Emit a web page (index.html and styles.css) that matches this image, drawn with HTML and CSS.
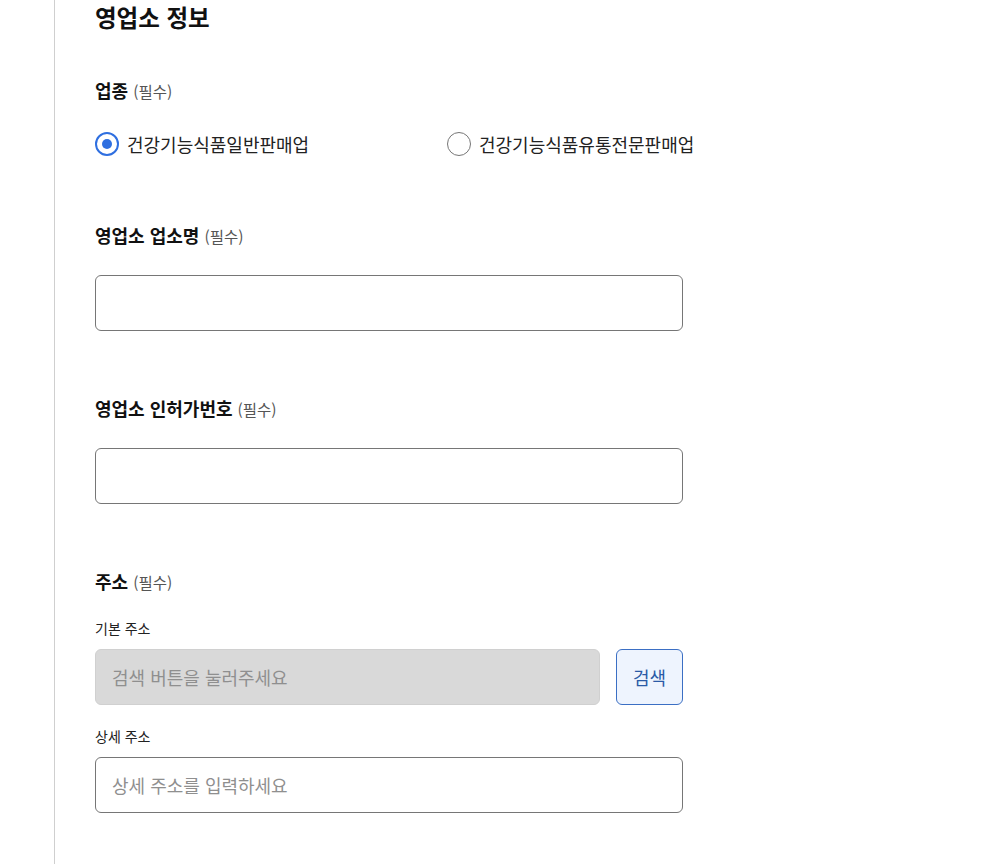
FILE: index.html
```html
<!DOCTYPE html>
<html lang="ko">
<head>
<meta charset="utf-8">
<link rel="stylesheet" href="styles.css">
</head>
<body>
<div class="page">
  <section class="panel">
    <h2 class="title">영업소 정보</h2>

    <div class="group group-type">
      <div class="label">업종 <span class="req">(필수)</span></div>
      <div class="radios">
        <label class="radio checked"><span class="circle"></span><span>건강기능식품일반판매업</span></label>
        <label class="radio"><span class="circle"></span><span>건강기능식품유통전문판매업</span></label>
      </div>
    </div>

    <div class="group">
      <div class="label">영업소 업소명 <span class="req">(필수)</span></div>
      <div class="input"></div>
    </div>

    <div class="group">
      <div class="label">영업소 인허가번호 <span class="req">(필수)</span></div>
      <div class="input"></div>
    </div>

    <div class="group">
      <div class="label">주소 <span class="req">(필수)</span></div>
      <div class="sublabel first">기본 주소</div>
      <div class="row">
        <div class="input disabled"><span class="ph">검색 버튼을 눌러주세요</span></div>
        <button class="btn">검색</button>
      </div>
      <div class="sublabel second">상세 주소</div>
      <div class="input"><span class="ph">상세 주소를 입력하세요</span></div>
    </div>
  </section>
</div>
</body>
</html>
```

FILE: styles.css
```css
html, body {
  margin: 0;
  padding: 0;
  background: #fff;
  font-family: "Noto Sans CJK KR", "Noto Sans", sans-serif;
  color: #111;
}
.page {
  padding-left: 54px;
  height: 864px;
  overflow: hidden;
}
.panel {
  border-left: 1px solid #cfcfcf;
  padding-left: 40px;
  min-height: 864px;
  box-sizing: border-box;
  width: 629px;
}
.title {
  margin: 0;
  font-size: 23.5px;
  line-height: 34px;
  font-weight: 700;
  color: #111;
}
.group {
  margin-top: 65px;
}
.group-type {
  margin-top: 44px;
  padding-bottom: 2px;
}
.label {
  font-size: 18px;
  line-height: 24px;
  font-weight: 700;
  color: #111;
}
.req {
  font-size: 15.5px;
  font-weight: 400;
  color: #555;
}
.radios {
  display: flex;
  margin-top: 29px;
}
.radio {
  display: flex;
  align-items: center;
  gap: 8px;
  width: 352px;
  flex: none;
  font-size: 18px;
  line-height: 24px;
  color: #222;
}
.circle {
  width: 24px;
  height: 24px;
  border: 1px solid #767676;
  border-radius: 50%;
  box-sizing: border-box;
  flex: none;
  display: flex;
  align-items: center;
  justify-content: center;
}
.radio.checked .circle {
  border: 2px solid #2f6fe0;
}
.radio.checked .circle::after {
  content: "";
  width: 10px;
  height: 10px;
  border-radius: 50%;
  background: #2f6fe0;
}
.input {
  margin-top: 27px;
  height: 56px;
  border: 1px solid #767676;
  border-radius: 6px;
  box-sizing: border-box;
  display: flex;
  align-items: center;
  padding: 0 16px;
  font-size: 18px;
}
.ph {
  color: #8f8f8f;
}
.sublabel {
  font-size: 14px;
  line-height: 20px;
  color: #222;
}
.sublabel.first {
  margin-top: 24px;
}
.sublabel.second {
  margin-top: 21px;
}
.sublabel + .input,
.row {
  margin-top: 11px;
}
.row {
  display: flex;
  gap: 16px;
}
.row .input {
  margin-top: 0;
  flex: 1;
}
.input.disabled {
  background: #d9d9d9;
  border-color: #d0d0d0;
}
.btn {
  width: 67px;
  height: 56px;
  border: 1px solid #3b6fc4;
  border-radius: 6px;
  background: #eef4fe;
  color: #2a5aa6;
  font-family: inherit;
  font-size: 18px;
  padding: 0;
}
```
